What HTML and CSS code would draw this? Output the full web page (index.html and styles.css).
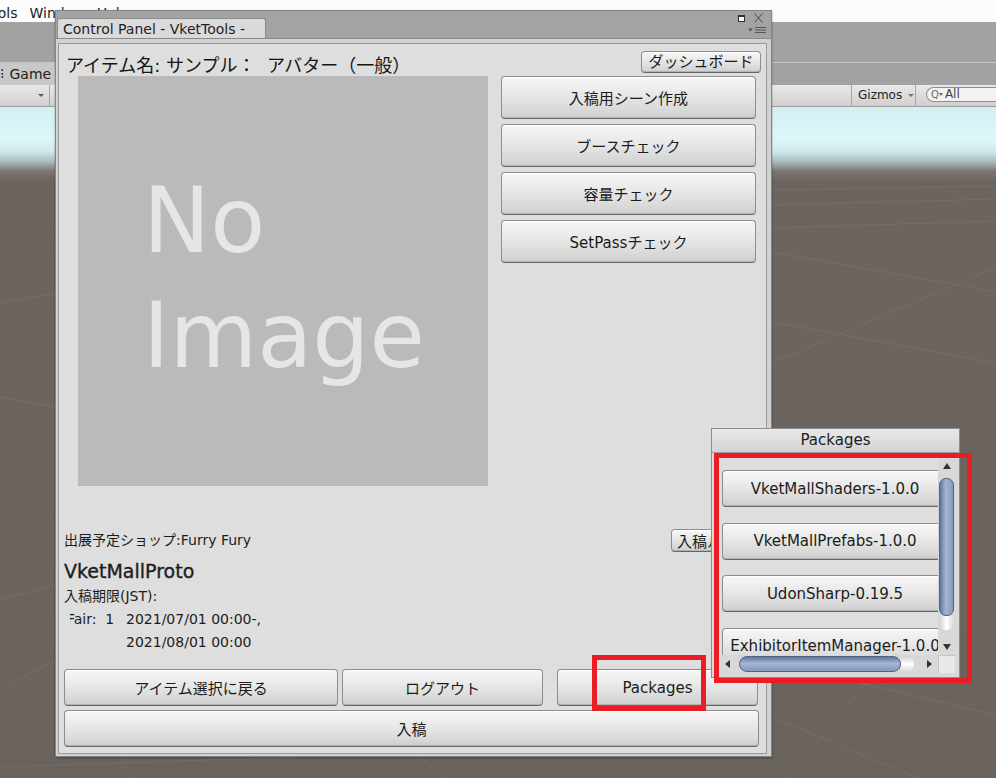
FILE: index.html
```html
<!DOCTYPE html>
<html lang="ja">
<head>
<meta charset="utf-8">
<title>Control Panel - VketTools</title>
<link rel="stylesheet" href="styles.css">
</head>
<body>
<div class="editor">
  <div class="menubar">
    <span class="menu-item menu-first">Tools</span>
    <span class="menu-item">Window</span>
    <span class="menu-item">Help</span>
  </div>
  <div class="dock"></div>
  <div class="tabbar">
    <div class="view-tab"><span class="tab-icon">⁝</span>Game</div>
  </div>
  <div class="scene-toolbar">
    <div class="tb-left"><span class="tri-down"></span></div>
    <div class="tb-right">
      <div class="tb-gizmos">Gizmos<span class="tri-down small"></span></div>
      <div class="tb-search"><span class="search-icon">Q</span><span class="tri-down tiny"></span><span class="search-text">All</span></div>
    </div>
  </div>
  <div class="scene">
    <svg class="grid" width="996" height="671" viewBox="0 0 996 671">
      <g stroke="#ffffff" stroke-opacity="0.07" stroke-width="1" fill="none">
        <line x1="772" y1="145" x2="996" y2="185"/>
        <line x1="772" y1="256" x2="996" y2="160"/>
        <line x1="772" y1="215" x2="996" y2="256"/>
        <line x1="772" y1="83" x2="996" y2="79"/>
        <line x1="772" y1="98" x2="996" y2="92"/>
        <line x1="772" y1="121" x2="996" y2="114"/>
        <line x1="772" y1="610" x2="996" y2="704"/>
        <line x1="790" y1="671" x2="900" y2="533"/>
        <line x1="860" y1="576" x2="996" y2="608"/>
        <line x1="0" y1="493" x2="55" y2="478"/>
        <line x1="0" y1="583" x2="55" y2="553"/>
        <line x1="0" y1="196" x2="55" y2="186"/>
        <line x1="0" y1="290" x2="55" y2="300"/>
        <line x1="120" y1="650" x2="135" y2="671"/>
        <line x1="420" y1="650" x2="445" y2="671"/>
        <line x1="0" y1="660" x2="300" y2="650"/>
      </g>
    </svg>
  </div>
</div>

<section class="cp">
  <div class="cp-tabbar">
    <div class="cp-tab">Control Panel - VketTools -</div>
    <div class="cp-tools">
      <div class="cp-tools-row">
        <span class="ico-max"></span>
        <svg class="ico-close" width="9" height="10" viewBox="0 0 9 10"><path d="M0.5 0.5 L8.5 9.5 M8.5 0.5 L0.5 9.5" stroke="#4a4a4a" stroke-width="1" fill="none"/></svg>
      </div>
      <svg class="ico-menu" width="18" height="6" viewBox="0 0 18 6"><path d="M0 1.5 H5 L2.5 4.5 Z" fill="#555"/><path d="M7 0.5 H18 M7 3 H18 M7 5.5 H18" stroke="#555" stroke-width="1"/></svg>
    </div>
  </div>
  <div class="cp-frame">
    <div class="cp-content">
      <div class="cp-header">
        <div class="item-title">アイテム名: サンプル：&nbsp; アバター（一般）</div>
        <button class="btn dash">ダッシュボード</button>
      </div>
      <div class="cp-main">
        <div class="noimage"><div class="noimage-text">No<br>Image</div></div>
        <div class="actions">
          <button class="btn btn-action">入稿用シーン作成</button>
          <button class="btn btn-action">ブースチェック</button>
          <button class="btn btn-action">容量チェック</button>
          <button class="btn btn-action">SetPassチェック</button>
        </div>
      </div>
      <div class="info">
        <div class="shop-row">
          <span class="shop-text">出展予定ショップ:Furry Fury</span>
          <button class="btn rules">入稿ルール</button>
        </div>
        <div class="world">VketMallProto</div>
        <div class="line">入稿期限(JST):</div>
        <div class="period">
          <div class="fair"><div class="fair-clip"><span>Fair:&nbsp; 1</span></div></div>
          <div class="dates">2021/07/01 00:00-,<br>2021/08/01 00:00</div>
        </div>
      </div>
      <div class="footer">
        <div class="footer-row">
          <button class="btn btn-foot back">アイテム選択に戻る</button>
          <button class="btn btn-foot logout">ログアウト</button>
          <button class="btn btn-foot packages">Packages</button>
        </div>
        <button class="btn btn-foot submit">入稿</button>
      </div>
    </div>
  </div>
</section>

<section class="pk">
  <div class="pk-title">Packages</div>
  <div class="pk-body">
    <div class="scrollview">
      <div class="viewport">
        <div class="pk-list">
          <button class="btn pk-btn">VketMallShaders-1.0.0</button>
          <button class="btn pk-btn">VketMallPrefabs-1.0.0</button>
          <button class="btn pk-btn">UdonSharp-0.19.5</button>
          <button class="btn pk-btn">ExhibitorItemManager-1.0.0</button>
        </div>
      </div>
      <div class="vscroll">
        <div class="arrow-box"><span class="tri-up"></span></div>
        <div class="vtrack"><div class="vthumb"></div><div class="vcap"></div></div>
        <div class="arrow-box"><span class="tri-down dark"></span></div>
      </div>
      <div class="hscroll">
        <div class="arrow-box h"><span class="tri-left"></span></div>
        <div class="htrack"><div class="hthumb"></div><div class="hcap"></div></div>
        <div class="arrow-box h"><span class="tri-right"></span></div>
      </div>
      <div class="corner"></div>
    </div>
  </div>
</section>

<div class="mark mark-packages"></div>
<div class="mark mark-popup"></div>
</body>
</html>
```

FILE: styles.css
```css
html, body {
  margin: 0;
  padding: 0;
}
body {
  width: 996px;
  height: 778px;
  overflow: hidden;
  position: relative;
  font-family: "DejaVu Sans", "Noto Sans CJK JP", sans-serif;
  color: #1c1c1c;
  background: #6a635e;
}

/* ---------- editor background ---------- */
.editor {
  display: flex;
  flex-direction: column;
  height: 778px;
}
.menubar {
  height: 22px;
  box-sizing: border-box;
  padding-top: 4px;
  background: #fcfcfc;
  display: flex;
  gap: 10px;
  font-size: 14px;
  line-height: 18px;
  color: #222;
  white-space: nowrap;
}
.menu-first { margin-left: -17px; }
.menu-item + .menu-item { margin-left: 2px; }
.dock {
  height: 40px;
  background: #a2a2a2;
  border-bottom: 1px solid #c4c4c4;
}
.tabbar {
  height: 22px;
  background: #a2a2a2;
  display: flex;
}
.view-tab {
  width: 70px;
  background: #c8c8c8;
  font-size: 14px;
  line-height: 22px;
  color: #222;
  white-space: nowrap;
}
.tab-icon { margin-right: 5px; margin-left: 0; }
.scene-toolbar {
  height: 21px;
  background: linear-gradient(#e8e8e8, #d0d0d0);
  border-bottom: 1px solid #9d9d9d;
  display: flex;
  justify-content: space-between;
}
.tb-left {
  width: 50px;
  border-right: 1px solid #a6a6a6;
  display: flex;
  align-items: center;
  justify-content: flex-end;
  padding-right: 5px;
  box-sizing: border-box;
}
.tri-down {
  display: inline-block;
  width: 0;
  height: 0;
  border-left: 3px solid transparent;
  border-right: 3px solid transparent;
  border-top: 3px solid #5a5a5a;
}
.tri-down.small { margin-left: 6px; vertical-align: 2px; border-top-color: #777; }
.tri-down.tiny { border-left-width: 2px; border-right-width: 2px; border-top: 3px solid #666; vertical-align: 2px; }
.tri-down.dark { border-left: 4px solid transparent; border-right: 4px solid transparent; border-top: 6px solid #333; }
.tb-right {
  display: flex;
  align-items: flex-start;
}
.tb-gizmos {
  width: 65px;
  box-sizing: border-box;
  border-left: 1px solid #a6a6a6;
  border-right: 1px solid #a6a6a6;
  padding-left: 6px;
  font-size: 12px;
  line-height: 21px;
  height: 21px;
  color: #222;
}
.tb-search {
  margin-left: 10px;
  margin-top: 2px;
  width: 70px;
  height: 15px;
  box-sizing: border-box;
  border: 1px solid #8f8f8f;
  border-right: 0;
  border-radius: 8px 0 0 8px;
  background: #f2f2f2;
  font-size: 12px;
  line-height: 13px;
  color: #444;
  padding-left: 4px;
  white-space: nowrap;
}
.search-icon { font-size: 10px; color: #666; }
.search-text { margin-left: 2px; }
.scene {
  flex: 1;
  background: linear-gradient(to bottom, #d3eff2 0px, #dcf7f9 32px, #d2eaec 44px, #a9babc 55px, #7c7773 64px, #6b645f 74px, #6a635e 100%);
}
.grid { display: block; }

/* ---------- control panel window ---------- */
.cp {
  position: absolute;
  left: 55px;
  top: 10px;
  width: 717px;
  height: 747px;
  box-sizing: border-box;
  border: 1px solid #858585;
  background: #d2d2d2;
  display: flex;
  flex-direction: column;
  box-shadow: 0 1px 2px rgba(0,0,0,0.35);
}
.cp-tabbar {
  height: 27px;
  background: #a3a3a3;
  border-bottom: 1px solid #8b8b8b;
  display: flex;
  align-items: flex-end;
}
.cp-tab {
  margin-left: 1px;
  width: 209px;
  height: 20px;
  box-sizing: border-box;
  border: 1px solid #8c8c8c;
  border-bottom: 0;
  border-radius: 3px 3px 0 0;
  background: #dadada;
  font-size: 14px;
  line-height: 21px;
  padding-left: 5px;
  color: #1e1e1e;
  white-space: nowrap;
}
.cp-tools {
  margin-left: auto;
  align-self: stretch;
  display: flex;
  flex-direction: column;
  align-items: flex-end;
  padding: 2px 5px 0 0;
}
.cp-tools-row {
  display: flex;
  align-items: center;
  gap: 9px;
  padding-right: 3px;
  height: 10px;
}
.ico-max {
  width: 5px;
  height: 4px;
  border: 1px solid #2f2f2f;
  border-top-width: 2px;
  background: #fff;
}
.ico-close { display: block; }
.ico-menu { display: block; margin-top: 4px; }
.cp-frame {
  flex: 1;
  display: flex;
  padding: 4px 4px 2px 2px;
}
.cp-content {
  flex: 1;
  border: 1px solid #9a9a9a;
  background: #dedede;
  display: flex;
  flex-direction: column;
}

/* buttons */
.btn {
  font-family: inherit;
  color: #1b1b1b;
  padding: 0;
  margin: 0;
  border: 1px solid #8d8d8d;
  border-bottom-color: #676767;
  border-radius: 4px;
  background: linear-gradient(#f7f7f7 0%, #ebebeb 35%, #d9d9d9 80%, #cdcdcd 100%);
  box-shadow: inset 0 1px 0 #ffffff, inset 0 -1px 0 #b3b3b3;
  box-sizing: border-box;
  white-space: nowrap;
  overflow: hidden;
}

.cp-header {
  height: 32px;
  display: flex;
  justify-content: space-between;
  padding: 0 5px 0 7px;
}
.item-title {
  align-self: flex-end;
  font-size: 18px;
  line-height: 20px;
  white-space: nowrap;
  color: #151515;
}
.dash {
  margin-top: 7px;
  width: 120px;
  height: 22px;
  font-size: 15px;
  line-height: 18px;
}
.cp-main {
  display: flex;
  padding-left: 19px;
  gap: 13px;
}
.noimage {
  width: 410px;
  height: 410px;
  background: #bababa;
  box-sizing: border-box;
  padding: 87px 0 0 65px;
}
.noimage-text {
  font-family: "DejaVu Sans", sans-serif;
  font-size: 90px;
  line-height: 115px;
  color: #e6e6e6;
}
.actions {
  width: 255px;
  display: flex;
  flex-direction: column;
  gap: 5px;
}
.btn-action {
  height: 43px;
  font-size: 15px;
}
.info {
  padding: 0 5px;
  font-size: 14px;
}
.shop-row {
  margin-top: 43px;
  height: 23px;
  display: flex;
  align-items: center;
}
.shop-text { line-height: 19px; }
.rules {
  margin-left: auto;
  width: 90px;
  height: 23px;
  font-size: 15px;
  text-align: left;
  padding-left: 5px;
}
.world {
  margin-top: 6px;
  font-size: 19px;
  line-height: 27px;
  -webkit-text-stroke: 0.35px #1c1c1c;
}
.line { line-height: 23px; }
.period {
  display: flex;
  line-height: 23px;
}
.fair {
  width: 62px;
  padding-left: 6px;
  box-sizing: border-box;
}
.fair-clip { overflow: hidden; white-space: nowrap; }
.fair-clip span { margin-left: -3px; }
.footer {
  margin-top: 15px;
  padding: 0 7px 0 5px;
  display: flex;
  flex-direction: column;
  gap: 4px;
}
.footer-row {
  display: flex;
  gap: 4px;
}
.btn-foot {
  height: 37px;
  font-size: 15px;
}
.back { width: 274px; }
.logout { width: 201px; }
.packages { width: 201px; margin-left: 10px; }
.submit { width: 100%; }

/* ---------- packages popup ---------- */
.pk {
  position: absolute;
  left: 711px;
  top: 428px;
  width: 249px;
  height: 250px;
  box-sizing: border-box;
  border: 1px solid #8c8c8c;
  background: #d9d9d9;
  display: flex;
  flex-direction: column;
}
.pk-title {
  height: 23px;
  flex: none;
  border-bottom: 1px solid #9c9c9c;
  background: linear-gradient(#e9e9e9, #d3d3d3);
  text-align: center;
  font-size: 15px;
  line-height: 23px;
  color: #1c1c1c;
}
.pk-body {
  flex: 1;
  min-height: 0;
  display: flex;
  padding: 4px 4px 4px 6px;
}
.scrollview {
  flex: 1;
  min-width: 0;
  display: grid;
  grid-template-columns: minmax(0, 1fr) 17px;
  grid-template-rows: minmax(0, 1fr) 18px;
  background: #dedede;
  border-left: 1px solid #b5b5b5;
}
.viewport {
  overflow: hidden;
  min-height: 0;
  min-width: 0;
}
.pk-list {
  padding: 13px 0 0 3px;
  display: flex;
  flex-direction: column;
  gap: 15.5px;
}
.pk-btn {
  width: 226px;
  height: 37px;
  font-size: 15px;
  flex: none;
}
.vscroll {
  display: flex;
  flex-direction: column;
  background: #d8d8d8;
  min-height: 0;
}
.arrow-box {
  height: 17px;
  flex: none;
  display: flex;
  align-items: center;
  justify-content: center;
}
.arrow-box.h { width: 17px; height: auto; }
.tri-up {
  width: 0;
  height: 0;
  border-left: 4px solid transparent;
  border-right: 4px solid transparent;
  border-bottom: 6px solid #333;
}
.tri-left {
  width: 0;
  height: 0;
  border-top: 4px solid transparent;
  border-bottom: 4px solid transparent;
  border-right: 5px solid #333;
}
.tri-right {
  width: 0;
  height: 0;
  border-top: 4px solid transparent;
  border-bottom: 4px solid transparent;
  border-left: 5px solid #333;
}
.vtrack {
  flex: 1;
  min-height: 0;
  padding: 4px 1px 0 1px;
  display: flex;
  flex-direction: column;
}
.vthumb {
  height: 138px;
  flex: none;
  box-sizing: border-box;
  border: 1px solid #4e6288;
  border-radius: 7px;
  background: linear-gradient(to right, #60759c, #a5b6d3 45%, #8598bb);
}
.vcap {
  height: 14px;
  flex: none;
  border-radius: 0 0 7px 7px;
  background: linear-gradient(to right, #cfcfcf, #ffffff 50%, #d8d8d8);
}
.hscroll {
  display: flex;
  background: #d8d8d8;
  min-width: 0;
}
.htrack {
  flex: 1;
  padding: 1px 0 1px 3px;
  display: flex;
}
.hthumb {
  width: 162px;
  flex: none;
  box-sizing: border-box;
  border: 1px solid #4e6288;
  border-radius: 8px;
  background: linear-gradient(to bottom, #60759c, #a5b6d3 45%, #8598bb);
}
.hcap {
  width: 13px;
  flex: none;
  border-radius: 0 8px 8px 0;
  background: linear-gradient(to bottom, #cfcfcf, #ffffff 50%, #d8d8d8);
}
.corner {
  background: #e8e8e8;
  border-left: 1px solid #c4c4c4;
  border-top: 1px solid #c4c4c4;
}

/* ---------- red annotation boxes ---------- */
.mark {
  position: absolute;
  box-sizing: border-box;
  border: 5px solid #ec1c24;
}
.mark-packages {
  left: 592px;
  top: 655px;
  width: 114px;
  height: 56px;
}
.mark-popup {
  left: 714px;
  top: 453px;
  width: 258px;
  height: 230px;
}
```
